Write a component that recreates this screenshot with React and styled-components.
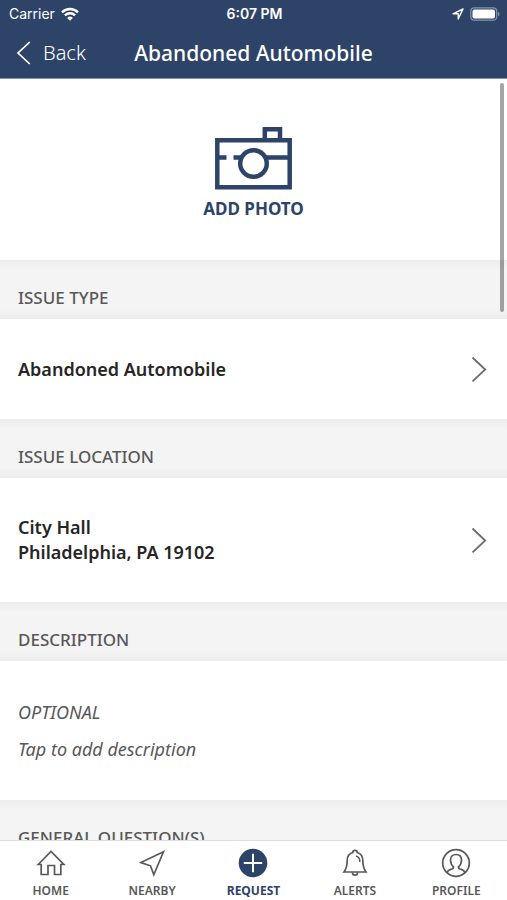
import React from 'react'
import styled, { createGlobalStyle, ThemeProvider } from 'styled-components';

const theme = {
    colors: {
        navy: '#2d4468',
        white: '#ffffff',
        black: '#262626',
        gray: '#58585a',
        lightGray: '#f4f4f4',
        edge: '#ededed',
    },
    fontSize: {
        tab: '12px',
        small: '14px',
        label: '17px',
        normal: '18px',
        back: '20px',
        title: '21px',
    },
};

const GlobalStyle = createGlobalStyle`
    * {
        box-sizing: border-box;
        margin: 0;
        padding: 0;
    }

    body {
        font-family: "Noto Sans", "Open Sans", sans-serif;
        background-color: #ffffff;
    }

    button {
        font: inherit;
        color: inherit;
        background: none;
        border: none;
        cursor: pointer;
    }
`;

const StyledApp = styled.div`
    display: flex;
    flex-direction: column;
    height: 100vh;
    overflow: hidden;
    color: ${({ theme }) => theme.colors.black};
`;

const StyledHeader = styled.header`
    flex: none;
    color: ${({ theme }) => theme.colors.white};
    background-color: ${({ theme }) => theme.colors.navy};
    border-bottom: 1px solid #7f9ab0;
`;

const StatusBar = styled.div`
    display: grid;
    grid-template-columns: 1fr auto 1fr;
    align-items: center;
    height: 27px;
    padding: 0 7px 0 9px;
    font-family: Inter, sans-serif;
    font-size: ${({ theme }) => theme.fontSize.small};

    & svg {
        display: block;
    }
`;

const StatusGroup = styled.div`
    display: flex;
    align-items: center;
    justify-content: ${({ $end }) => ($end ? 'flex-end' : 'flex-start')};
    gap: 6px;
`;

const StatusTime = styled.span`
    font-weight: 600;
`;

const NavBar = styled.div`
    display: grid;
    grid-template-columns: 1fr auto 1fr;
    align-items: center;
    height: 51px;
    padding: 0 16px;
`;

const BackButton = styled.button`
    display: flex;
    align-items: center;
    gap: 12px;
    justify-self: start;
    font-size: ${({ theme }) => theme.fontSize.back};
    font-weight: 300;
`;

const Title = styled.h1`
    font-size: ${({ theme }) => theme.fontSize.title};
    font-weight: 500;
`;

const Content = styled.main`
    position: relative;
    flex: 1;
    min-height: 0;
    overflow: hidden;
`;

const ScrollThumb = styled.div`
    position: absolute;
    top: 4px;
    right: 3px;
    width: 4px;
    height: 229px;
    border-radius: 2px;
    background-color: rgba(0, 0, 0, 0.35);
`;

const PhotoButton = styled.button`
    display: flex;
    flex-direction: column;
    align-items: center;
    width: 100%;
    padding: 48px 0 39px;
    gap: 7px;
    color: ${({ theme }) => theme.colors.navy};
    font-size: ${({ theme }) => theme.fontSize.label};
    font-weight: 700;
    line-height: 24px;
`;

const SectionTitle = styled.h2`
    height: 59px;
    padding: 24px 18px 0;
    color: ${({ theme }) => theme.colors.gray};
    background: linear-gradient(
        ${({ theme }) => theme.colors.edge},
        ${({ theme }) => theme.colors.lightGray} 10px,
        ${({ theme }) => theme.colors.lightGray} 48px,
        ${({ theme }) => theme.colors.edge}
    );
    font-size: ${({ theme }) => theme.fontSize.label};
    font-weight: 500;
    line-height: 28px;
`;

const SectionRow = styled.button`
    display: flex;
    align-items: center;
    justify-content: space-between;
    width: 100%;
    padding: 37px 20px 37px 18px;
    text-align: left;
    font-size: ${({ theme }) => theme.fontSize.normal};
    font-weight: 600;
    line-height: 25px;
`;

const DescriptionField = styled.button`
    display: flex;
    flex-direction: column;
    gap: 12px;
    width: 100%;
    padding: 39px 18px 38px;
    color: ${({ theme }) => theme.colors.gray};
    text-align: left;
    font-size: ${({ theme }) => theme.fontSize.normal};
    font-style: italic;
    line-height: 25px;
`;

const TabBar = styled.nav`
    flex: none;
    display: grid;
    grid-template-columns: repeat(5, 1fr);
    height: 60px;
    border-top: 1px solid #dcdcdc;
    background-color: ${({ theme }) => theme.colors.white};
`;

const Tab = styled.button`
    display: flex;
    flex-direction: column;
    align-items: center;
    padding-top: 7px;
    gap: 4px;
    color: ${({ theme, $active }) => ($active ? theme.colors.navy : theme.colors.gray)};
    font-size: ${({ theme }) => theme.fontSize.tab};
    font-weight: ${({ $active }) => ($active ? 700 : 600)};
    line-height: 18px;
`;

const LineIcon = ({ size = 30, strokeWidth = 1.7, children }) => (
    <svg
        width={size}
        height={size}
        viewBox="0 0 30 30"
        fill="none"
        stroke="currentColor"
        strokeWidth={strokeWidth}
        aria-hidden="true"
    >
        {children}
    </svg>
)

const HomeIcon = () => (
    <LineIcon>
        <path d="M2.200 16.500 15 3.500 27.800 16.500H24.800V26.500H18.500V17.500H12V26.500H5.200V16.500Z" />
    </LineIcon>
)

const NearbyIcon = () => (
    <LineIcon>
        <path d="M26.500 3.800 3.800 14.500 13.500 17.800 16.800 26.800Z" />
    </LineIcon>
)

const RequestIcon = () => (
    <LineIcon strokeWidth={2}>
        <circle cx="15" cy="15" r="14.300" fill="currentColor" stroke="none" />
        <path d="M15 5.800V24.200M5.800 15H24.200" stroke="#ffffff" />
    </LineIcon>
)

const AlertsIcon = () => (
    <LineIcon>
        <path d="M12.800 4.500a2.200 2.200 0 0 1 4.400 0C21 5.500 22.800 8.500 22.800 12.500c0 5 .7 8 3.200 11.500H4c2.500-3.500 3.200-6.500 3.200-11.500C7.200 8.500 9 5.500 12.800 4.500Z" />
        <path d="M12.500 24.500a2.500 2.700 0 0 0 5 0" />
        <path d="M16 8c2.800.8 3.900 2.500 3.900 6" strokeWidth="1.400" />
    </LineIcon>
)

const ProfileIcon = () => (
    <LineIcon>
        <circle cx="15" cy="15" r="13.300" />
        <path d="M6 24.800c.5-2.300 2.500-2.900 4.500-3.600 1.700-.6 2.200-1.300 2-2.400C10.300 17 9.500 14.500 9.500 12c0-3.500 2.300-5.500 5.500-5.500s5.500 2 5.500 5.500c0 2.500-.8 5-3 6.800-.2 1.100.3 1.800 2 2.400 2 .7 4 1.300 4.500 3.600" />
    </LineIcon>
)

const CameraIcon = () => (
    <svg width="77" height="63" viewBox="0 0 77 63" fill="none" stroke="currentColor" strokeWidth="4.500" aria-hidden="true">
        <path d="M2.300 13.300H74.700V60.200H2.300ZM49.800 13.300V2.300H65V13.300" />
        <path d="M2 30.500H11.500M18.500 30.500H26M51 30.500H75" />
        <circle cx="38.500" cy="36.500" r="13.300" />
    </svg>
)

const ChevronRight = () => (
    <svg width="16" height="26" viewBox="0 0 16 26" fill="none" stroke="#6b6b6d" strokeWidth="1.800" aria-hidden="true">
        <path d="M1.500 1.500 14.200 13.500 1.500 25.300" />
    </svg>
)

const ChevronLeft = () => (
    <svg width="15" height="24" viewBox="0 0 15 24" fill="none" stroke="currentColor" strokeWidth="1.700" aria-hidden="true">
        <path d="M13.800 1 2 12 13.800 23" />
    </svg>
)

const WifiIcon = () => (
    <svg width="18" height="14" viewBox="0 0 18 14" fill="none" stroke="currentColor" strokeWidth="2.400" aria-hidden="true">
        <path d="M1 5.300a11.400 11.400 0 0 1 16 0M3.900 8.400a7.300 7.300 0 0 1 10.200 0" />
        <path d="M9 13.800 6.200 10.900a4 4 0 0 1 5.600 0Z" fill="currentColor" stroke="none" />
    </svg>
)

const LocationIcon = () => (
    <svg width="12" height="12" viewBox="0 0 12 12" fill="none" stroke="currentColor" strokeWidth="1.400" strokeLinejoin="round" aria-hidden="true">
        <path d="M11 1 1 5.800H6.200V11Z" />
    </svg>
)

const BatteryIcon = () => (
    <svg width="30" height="14" viewBox="0 0 30 14" aria-hidden="true">
        <rect x=".8" y=".8" width="25.900" height="12.400" rx="3.500" fill="none" stroke="#8594ac" strokeWidth="1.200" />
        <rect x="2.500" y="2.500" width="22.500" height="9" rx="2" fill="#ffffff" />
        <path d="M28 4.800c2 .8 2 3.600 0 4.400Z" fill="#8594ac" />
    </svg>
)

const tabs = [
    { label: 'HOME', Icon: HomeIcon },
    { label: 'NEARBY', Icon: NearbyIcon },
    { label: 'REQUEST', Icon: RequestIcon, active: true },
    { label: 'ALERTS', Icon: AlertsIcon },
    { label: 'PROFILE', Icon: ProfileIcon },
];

const App = () => {
    return (
        <ThemeProvider theme={theme}>
            <GlobalStyle />
            <StyledApp>
                <StyledHeader>
                    <StatusBar>
                        <StatusGroup>
                            <span>Carrier</span>
                            <WifiIcon />
                        </StatusGroup>
                        <StatusTime>6:07 PM</StatusTime>
                        <StatusGroup $end>
                            <LocationIcon />
                            <BatteryIcon />
                        </StatusGroup>
                    </StatusBar>
                    <NavBar>
                        <BackButton type="button">
                            <ChevronLeft />
                            Back
                        </BackButton>
                        <Title>Abandoned Automobile</Title>
                    </NavBar>
                </StyledHeader>

                <Content>
                    <PhotoButton type="button">
                        <CameraIcon />
                        ADD PHOTO
                    </PhotoButton>

                    <SectionTitle>ISSUE TYPE</SectionTitle>
                    <SectionRow type="button">
                        <span>Abandoned Automobile</span>
                        <ChevronRight />
                    </SectionRow>

                    <SectionTitle>ISSUE LOCATION</SectionTitle>
                    <SectionRow type="button">
                        <span>
                            City Hall<br />
                            Philadelphia, PA 19102
                        </span>
                        <ChevronRight />
                    </SectionRow>

                    <SectionTitle>DESCRIPTION</SectionTitle>
                    <DescriptionField type="button">
                        <span>OPTIONAL</span>
                        <span>Tap to add description</span>
                    </DescriptionField>

                    <SectionTitle>GENERAL QUESTION(S)</SectionTitle>
                    <ScrollThumb />
                </Content>

                <TabBar>
                    {tabs.map(({ label, Icon, active }) => (
                        <Tab key={label} type="button" $active={active}>
                            <Icon />
                            {label}
                        </Tab>
                    ))}
                </TabBar>
            </StyledApp>
        </ThemeProvider>
    )
}

export default App
